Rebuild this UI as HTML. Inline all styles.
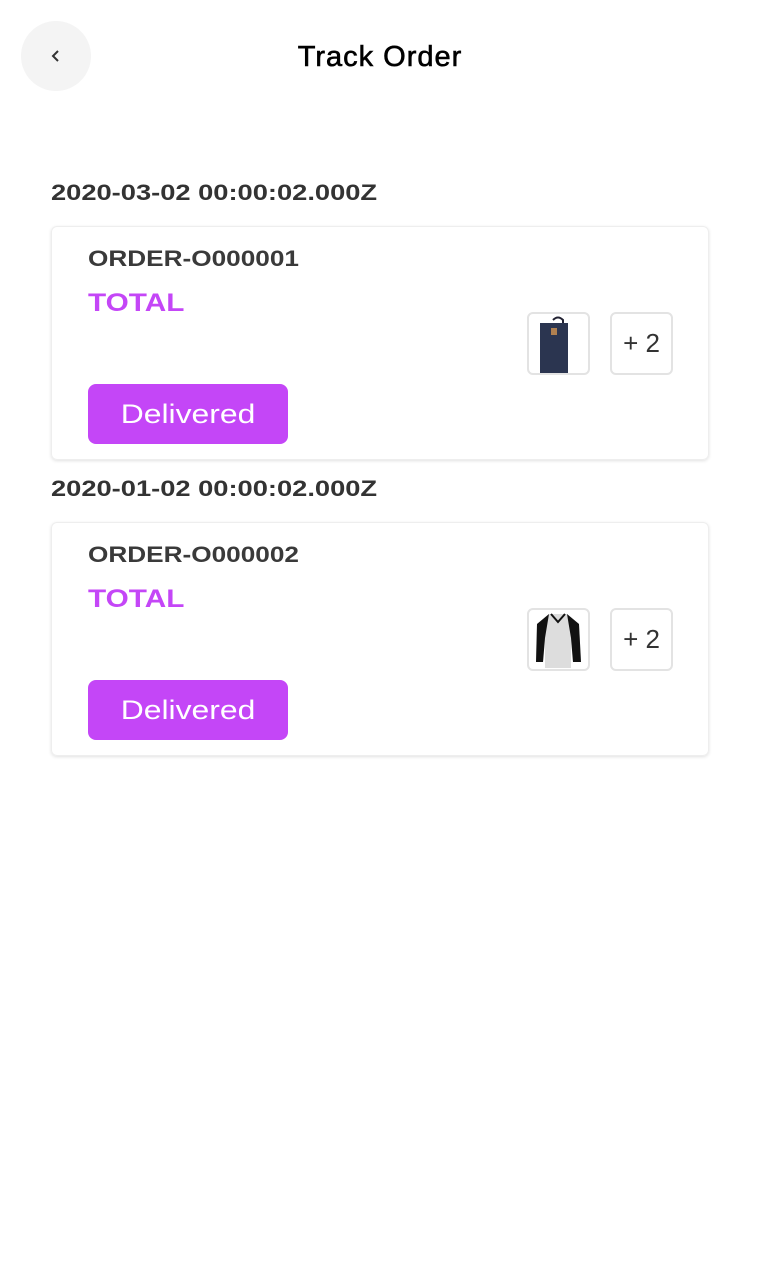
<!DOCTYPE html>
<html><head><meta charset="utf-8"><style>
*{margin:0;padding:0;box-sizing:border-box}
body{width:760px;height:1282px;background:#fff;font-family:"Liberation Sans",sans-serif;position:relative;overflow:hidden}
.back{position:absolute;left:21px;top:21px;width:70px;height:70px;border-radius:50%;background:#f4f4f4}
.back svg{position:absolute;left:29px;top:28px}
h1{position:absolute;top:41px;left:0;width:760px;text-align:center;font-size:29px;font-weight:normal;color:#000;letter-spacing:1px;-webkit-text-stroke:0.6px #000}
.date{position:absolute;left:51px;font-size:22px;font-weight:bold;color:#333;transform:scaleX(1.24);transform-origin:0 0;white-space:nowrap}
.card{position:absolute;left:51px;width:658px;height:234px;border:1px solid #eee;border-radius:6px;box-shadow:0 1px 3px rgba(0,0,0,.12)}
.oid{position:absolute;left:36px;top:19px;font-size:22px;font-weight:bold;color:#3a3a3a;transform:scaleX(1.19);transform-origin:0 0;white-space:nowrap}
.tot{position:absolute;left:36px;top:62px;font-size:25px;font-weight:bold;color:#c446f7;transform:scaleX(1.19);transform-origin:0 0}
.btn{position:absolute;left:36px;top:157px;width:200px;height:60px;border-radius:8px;background:#c446f7;color:#fff;font-size:27px;text-align:center;line-height:60px}
.btn span{display:inline-block;transform:scaleX(1.18)}
.th{position:absolute;top:85px;width:63px;height:63px;border:2px solid #e3e3e3;border-radius:6px;background:#fff;overflow:hidden}
.plus{left:558px;font-size:26px;color:#333;text-align:center;line-height:58px}
</style></head><body>
<div class="back"><svg width="12" height="14" viewBox="0 0 12 14"><path d="M8 2 L3 7 L8 12" fill="none" stroke="#333" stroke-width="2"/></svg></div>
<h1>Track Order</h1>

<div class="date" style="top:180px">2020-03-02 00:00:02.000Z</div>
<div class="card" style="top:226px">
<div class="oid">ORDER-O000001</div>
<div class="tot">TOTAL</div>
<div class="th" style="left:475px"><svg width="59" height="59" viewBox="0 0 59 59"><path d="M24 6 q5-5 10 0 v4" fill="none" stroke="#223" stroke-width="2"/><rect x="11" y="9" width="28" height="50" fill="#2b3550"/><rect x="22" y="14" width="6" height="7" fill="#b08050"/></svg></div>
<div class="th plus">+ 2</div>
<div class="btn"><span>Delivered</span></div>
</div>

<div class="date" style="top:476px">2020-01-02 00:00:02.000Z</div>
<div class="card" style="top:522px">
<div class="oid">ORDER-O000002</div>
<div class="tot">TOTAL</div>
<div class="th" style="left:475px"><svg width="59" height="59" viewBox="0 0 59 59"><path d="M20 4 L38 4 L50 14 L52 52 L44 52 L42 30 L42 58 L16 58 L16 30 L14 52 L7 52 L8 14 Z" fill="#ddd"/><path d="M20 4 L8 14 L7 52 L14 52 L16 28 Z M38 4 L50 14 L52 52 L44 52 L42 28 Z" fill="#111"/><path d="M22 4 L29 12 L36 4" fill="none" stroke="#111" stroke-width="2"/></svg></div>
<div class="th plus">+ 2</div>
<div class="btn"><span>Delivered</span></div>
</div>
</body></html>
